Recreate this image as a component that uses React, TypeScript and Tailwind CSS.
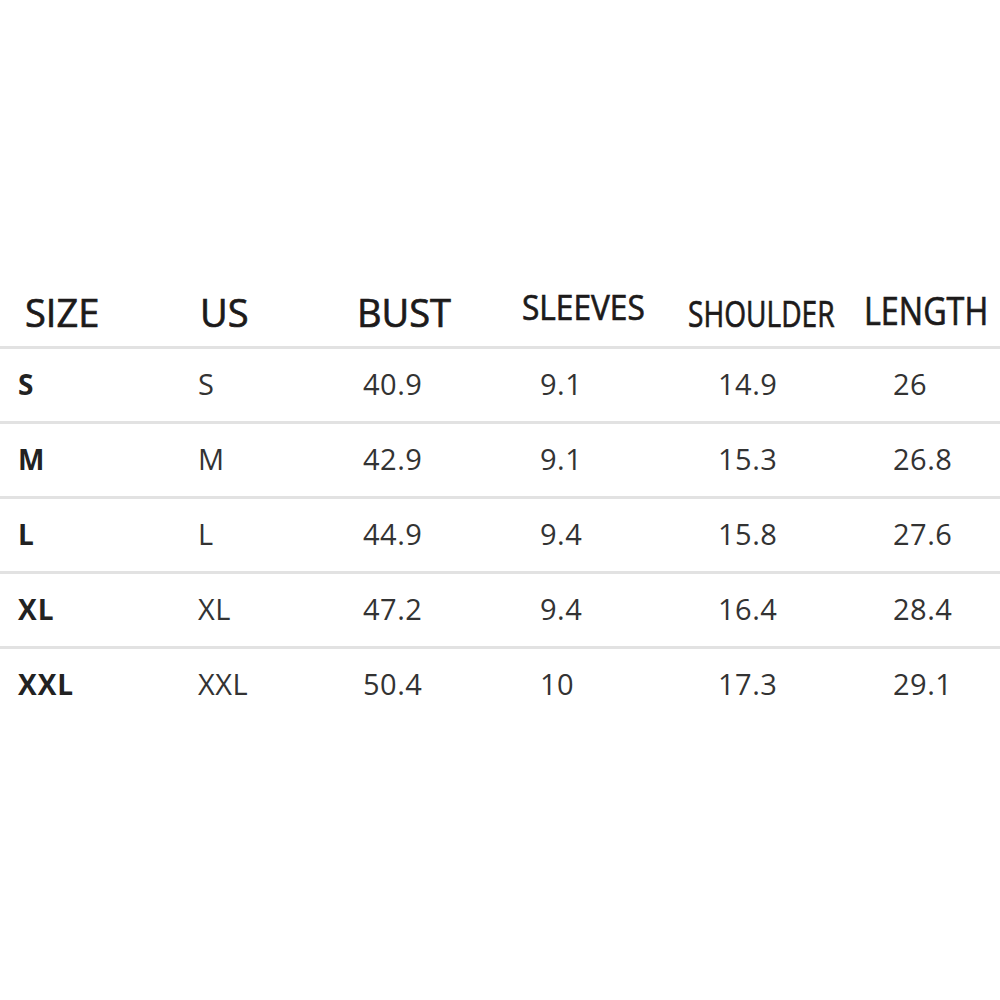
const headers: { label: string; w: string; cls: string }[] = [
  { label: "SIZE", w: "w-[175px]", cls: "text-[38px]" },
  { label: "US", w: "w-[157px]", cls: "text-[38px]" },
  { label: "BUST", w: "w-[165px]", cls: "text-[38px]" },
  { label: "SLEEVES", w: "w-[166px]", cls: "text-[34px] scale-x-[0.93] -translate-y-[5px]" },
  { label: "SHOULDER", w: "w-[176px]", cls: "text-[37px] scale-x-[0.76]" },
  { label: "LENGTH", w: "w-[136px]", cls: "text-[38px] scale-x-[0.85] -translate-y-[2px]" },
];

const rows = [
  ["S", "S", "40.9", "9.1", "14.9", "26"],
  ["M", "M", "42.9", "9.1", "15.3", "26.8"],
  ["L", "L", "44.9", "9.4", "15.8", "27.6"],
  ["XL", "XL", "47.2", "9.4", "16.4", "28.4"],
  ["XXL", "XXL", "50.4", "10", "17.3", "29.1"],
];

const colW = ["w-[180px]", "w-[165px]", "w-[177px]", "w-[178px]", "w-[175px]", "w-[107px]"];

export default function App() {
  return (
    <div className="w-[1000px] h-[1000px] bg-white pt-[280px]" style={{ fontFamily: '"Open Sans", "Noto Sans", sans-serif' }}>
      {/* header row */}
      <div className="flex h-[66px] items-center pl-[25px] text-[#1c1a1a] [-webkit-text-stroke-width:0.7px]">
        {headers.map((h) => (
          <div key={h.label} className={`${h.w} shrink-0`}>
            <span className={`inline-block origin-left leading-none whitespace-nowrap ${h.cls}`}>{h.label}</span>
          </div>
        ))}
      </div>
      {rows.map((r) => (
        <div key={r[0]} className="flex h-[75px] items-center border-t-[3px] border-[#e2e2e2] pl-[18px] pb-[3px] text-[29px] tracking-[0.5px] text-[#333]">
          {r.map((c, i) => (
            <div key={i} className={`${colW[i]} shrink-0 leading-none ${i === 0 ? "font-bold text-[28px] tracking-[1px] text-[#222]" : ""}`}>
              {c}
            </div>
          ))}
        </div>
      ))}
    </div>
  );
}
